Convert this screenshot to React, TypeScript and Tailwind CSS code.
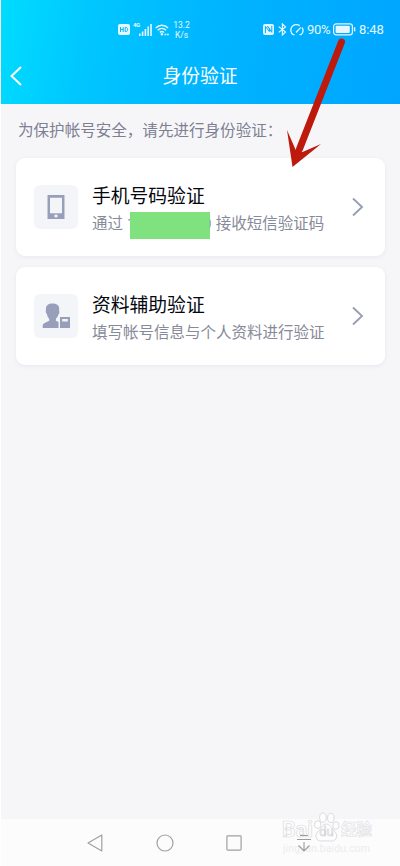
import type { ReactNode } from 'react';

type VerifyCardProps = {
    icon: ReactNode;
    title: string;
    children: ReactNode;
};

function StatusBar() {
    return (
        <div className="flex h-[59px] items-center pl-[118px] text-white/90">
            <svg width="12" height="11" viewBox="0 0 12 11">
                <rect width="12" height="11" rx="2" fill="currentColor" />
                <path d="M2.5 3v5M5.2 3v5M2.5 5.5h2.7M7.2 3.4v4.2h.7c2.4 0 2.4-4.2 0-4.2z" fill="none" stroke="#00b9ff" strokeWidth="1" />
            </svg>
            <span className="ml-[3px] mb-[9px] w-[7px] text-[6px] leading-none font-bold tracking-[-0.5px]">4G</span>
            <svg className="-ml-px" width="13" height="12" viewBox="0 0 13 12" fill="currentColor">
                <path d="M0 9.5h1.6V12H0zM2.8 7.5h1.6V12H2.8zM5.6 5h1.6v7H5.6zM8.4 2.5H10V12H8.4zM11.2 0h1.6v12h-1.6z" />
            </svg>
            <svg className="ml-[3px]" width="15" height="12" viewBox="0 0 15 12" fill="none" stroke="currentColor" strokeWidth="1.4">
                <path d="M.7 4C4.2.3 9.6.3 13.1 4M2.7 6.3c2.5-2.4 6-2.4 8.4 0M4.8 8.4c1.3-1.1 3-1.1 4.2 0" />
                <circle cx="6.9" cy="10.3" r=".6" fill="currentColor" />
                <path d="M9.5 10.5h1.8M12 10.5h1.8" />
            </svg>
            <div className="ml-[2px] w-[19px] text-center text-[8.5px] leading-[10px]">
                <div>13.2</div>
                <div>K/s</div>
            </div>
            <svg className="ml-[72px]" width="11" height="11" viewBox="0 0 11 11">
                <rect width="11" height="11" rx="2" fill="currentColor" />
                <path d="M2.4 9V2.4l4 5.2V4M4.8 3.4V2.3l4 6V1.8" fill="none" stroke="#00aaff" strokeWidth="1" />
            </svg>
            <svg className="ml-[4px]" width="9" height="13" viewBox="0 0 9 13" fill="none" stroke="currentColor" strokeWidth="1.2">
                <path d="M.7 3.6 7.5 9 4.4 12V1l3.1 3L.7 9.4" />
            </svg>
            <svg className="ml-[3px]" width="14" height="12" viewBox="0 0 14 12" fill="none" stroke="currentColor" strokeWidth="1.3">
                <path d="M3.2 10.8A5.6 5.6 0 1 1 9.7 1.6M12.1 3.6a5.6 5.6 0 0 1-1.3 7.2M6 8.5l4.8-5.1M3 10.7h1.5M9.5 10.7H11" />
            </svg>
            <span className="ml-[3px] w-[24px] text-[13px] tracking-[-0.3px]">90%</span>
            <svg className="ml-[2px]" width="23" height="13" viewBox="0 0 23 13">
                <rect x=".6" y=".8" width="18.8" height="11" rx="2.6" fill="none" stroke="currentColor" strokeWidth="1.2" />
                <rect x="2.6" y="2.7" width="14.2" height="7.2" rx="1" fill="currentColor" />
                <path d="M21.6 4.2v4.2" stroke="currentColor" strokeWidth="1.4" />
            </svg>
            <span className="ml-[3px] text-[13px] tracking-[-0.1px]">8:48</span>
        </div>
    );
}

function VerifyCard({ icon, title, children }: VerifyCardProps) {
    return (
        <button
            type="button"
            className="flex h-[98px] w-[369px] items-center rounded-[9px] bg-white pl-[18px] text-left shadow-[0_1px_4px_rgba(50,60,90,0.07)]"
        >
            <span className="flex size-[44px] shrink-0 items-center justify-center rounded-[6px] bg-[#f4f5f8]">{icon}</span>
            <span className="ml-[14px] w-[240px] pt-[7px]">
                <span className="block text-[18.8px] leading-[28px] text-[#05070f]">{title}</span>
                <span className="flex h-[27px] items-center text-[15.5px] whitespace-nowrap text-[#878a99]">{children}</span>
            </span>
            <svg className="ml-[20px]" width="12" height="20" viewBox="0 0 12 20" fill="none" stroke="#989eb4" strokeWidth="1.9">
                <path d="m1 1.5 9 8.5-9 8.5" />
            </svg>
        </button>
    );
}

function PhoneIcon() {
    return (
        <svg width="18" height="26" viewBox="0 0 18 26">
            <path fillRule="evenodd" fill="#989fba" d="M.5 1h17v24H.5zM3 3.7v15.6h12V3.7z" />
            <rect x="7.5" y="20.7" width="3" height="2.6" fill="#f4f5f8" />
        </svg>
    );
}

function ProfileIcon() {
    return (
        <svg width="28" height="26" viewBox="0 0 28 26" fill="#989fba">
            <path d="M4 6.500C3.600 2.500 6.500.6 10.500.6c4.800 0 7.300 2.200 6.600 6.800.7 1.600.2 3.200-.6 3.900-.5 2.200-1.700 3.600-2.600 4.500v2l2.600 1.100V25H.7v-2.500c.5-2.500 4-3.400 6.500-4.700v-2c-1-1-1.900-2.500-2.200-4.500C3.800 10.300 3.400 8 4 6.500z" />
            <path fillRule="evenodd" d="M18 14h10v11H18zM20.200 16v2.600h5.600V16z" />
        </svg>
    );
}

function Watermark() {
    return (
        <div className="absolute top-[-7px] left-[281px] w-[94px] text-transparent">
            <div className="flex h-[30px] items-end">
                <span className="w-[31px] text-[21.5px] leading-[24px] font-bold [-webkit-text-stroke:0.7px_#dddde0]">Bai</span>
                <span className="relative flex h-[30px] w-[27px] items-end justify-center">
                    <svg className="absolute inset-0" width="27" height="30" viewBox="0 0 27 31" fill="#fdfdfd" stroke="#d9d9dc" strokeWidth="1">
                        <ellipse cx="4.4" cy="13" rx="3.4" ry="4" />
                        <ellipse cx="9.8" cy="5.8" rx="3.4" ry="4.8" />
                        <ellipse cx="18" cy="6.2" rx="3.4" ry="4.8" />
                        <ellipse cx="23.2" cy="14" rx="3.2" ry="4" />
                        <path d="M13.500 12.500c4 0 4.500 4.200 8 7.200 4.600 4.100 2.300 10.300-2.300 10.300-3 0-8.400-.4-11 0-5.200.6-7.800-6-3.300-10C8.500 16.800 9.500 12.500 13.500 12.500z" />
                    </svg>
                    <span className="relative text-[13px] leading-[21px] [-webkit-text-stroke:0.6px_#d3d3d7]">du</span>
                </span>
                <span className="ml-[1px] text-[15.5px] leading-[24px] font-bold [-webkit-text-stroke:0.6px_#e0e0e3]">经验</span>
            </div>
            <div className="mt-[1px] ml-px text-[10.5px] leading-[12px] tracking-[0.1px] text-[#ececef]">jingyan.baidu.com</div>
        </div>
    );
}

function NavBar() {
    return (
        <nav className="relative flex h-[47px] items-center bg-[#fcfcfd] pl-[86px]">
            <svg width="16" height="18" viewBox="0 0 16 18" fill="none" stroke="#a0a0a2" strokeWidth="1.2" strokeLinejoin="round">
                <path d="M14.8 1v16L1 9z" />
            </svg>
            <svg className="ml-[53px]" width="18" height="18" viewBox="0 0 18 18" fill="none" stroke="#a0a0a2" strokeWidth="1.2">
                <circle cx="9" cy="9" r="8" />
            </svg>
            <svg className="ml-[52px]" width="16" height="16" viewBox="0 0 16 16" fill="none" stroke="#a0a0a2" strokeWidth="1.2">
                <rect x=".9" y=".9" width="14.2" height="14.2" rx=".8" />
            </svg>
            <Watermark />
            <svg className="relative ml-[54px]" width="16" height="18" viewBox="0 0 16 18" fill="none" stroke="#9d9d9f" strokeWidth="1.1">
                <path d="M4 1.500h8M1 5.500h14M8 8v9M2.500 11.500 8 17l5.500-5.500" />
            </svg>
        </nav>
    );
}

export default function App() {
    return (
        <div className="relative flex h-[866px] w-[400px] flex-col overflow-hidden border-l border-white bg-[#f6f6f9] font-['Roboto','Noto_Sans_CJK_SC',sans-serif]">
            <header className="h-[104px] bg-[linear-gradient(100deg,#00dcff_0%,#00c5ff_24%,#00b5ff_52%,#00a5ff_100%)]">
                <div className="-ml-px">
                    <StatusBar />
                    <div className="relative flex h-[36px] items-center justify-center text-white">
                        <button type="button" className="absolute top-[7px] left-[10px]" aria-label="返回">
                            <svg width="12" height="20" viewBox="0 0 12 20" fill="none" stroke="currentColor" strokeWidth="2">
                                <path d="m11 1-9.500 9 9.500 9" />
                            </svg>
                        </button>
                        <h1 className="pt-px text-[18.8px]">身份验证</h1>
                    </div>
                </div>
            </header>

            <main className="flex-1 pl-[15px]">
                <p className="flex h-[54px] items-center pt-[2px] pl-[2px] text-[15.55px] text-[#7e8092]">
                    为保护帐号安全，请先进行身份验证<span>：</span>
                </p>
                <div className="flex flex-col gap-[11px]">
                    <VerifyCard icon={<PhoneIcon />} title="手机号码验证">
                        <span className="w-[35px]">通过</span>
                        <span>1</span>
                        <span className="relative mt-[2px] -ml-[6px] h-[27px] w-[80px] bg-[#80e27e]" />
                        <span className="-ml-[7px] w-[13px] [clip-path:inset(0_0_0_7px)]">0</span>
                        <span>接收短信验证码</span>
                    </VerifyCard>
                    <VerifyCard icon={<ProfileIcon />} title="资料辅助验证">
                        填写帐号信息与个人资料进行验证
                    </VerifyCard>
                </div>
            </main>

            <NavBar />

            {/* pointer to the phone verification card */}
            <svg className="pointer-events-none absolute top-[34px] left-[279px]" width="72" height="140" viewBox="0 0 72 140">
                <path d="M61.500 8 19.500 115" stroke="#bd1a0d" strokeWidth="7" strokeLinecap="round" fill="none" />
                <path d="M12.500 133 7 96l8.500 19.500 7 2.500 18.500-8z" fill="#bd1a0d" />
            </svg>
        </div>
    );
}
